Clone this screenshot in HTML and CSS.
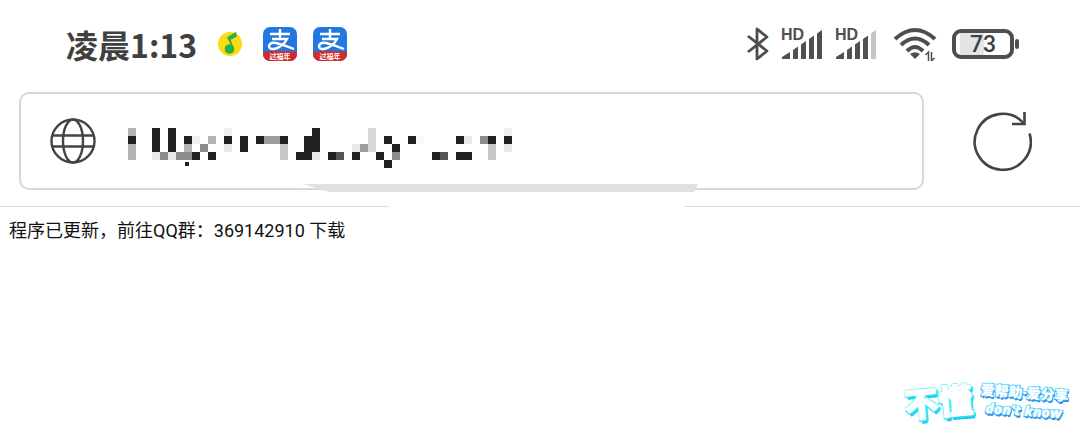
FILE: index.html
```html
<!DOCTYPE html>
<html lang="zh-CN">
<head>
    <meta charset="UTF-8">
    <meta name="viewport" content="width=device-width, initial-scale=1.0">
    <title>程序已更新</title>
    <link rel="stylesheet" href="styles.css">
</head>
<body>

    <header class="browser">
        <div class="status-bar">
            <div class="status-left">
                <span class="time">凌晨1:13</span>
                <svg class="music-icon" viewBox="0 0 26 26" width="26" height="26" aria-hidden="true">
                    <circle cx="13" cy="13" r="12" fill="#fbdc12"/>
                    <circle cx="12.500" cy="18" r="4.800" fill="#2fae4c"/>
                    <path d="M16.500 18 L11 6.500 L18.500 2 L19 5 L13.500 8" fill="#2fae4c" stroke="#2fae4c" stroke-width="1.500"/>
                    <path d="M13.500 8 L17 17" stroke="#fbdc12" stroke-width="0"/>
                </svg>
                <svg class="pay-icon" viewBox="0 0 34 34" width="34" height="34" aria-hidden="true">
                    <clipPath id="payShape"><rect width="34" height="34" rx="7"/></clipPath>
                    <g clip-path="url(#payShape)">
                        <rect width="34" height="34" fill="#2377e0"/>
                        <path d="M0 25 Q17 23 34 25 V34 H0Z" fill="#cf2a2c"/>
                        <path d="M7 7 H27 M17 2 V12 M9 12 H24 Q20 20 11 22 Q6 22.500 6 19 Q7 15 13 16 Q21 18 31 22" fill="none" stroke="#fff" stroke-width="2.400"/>
                        <text class="pay-text" x="17" y="32" text-anchor="middle">过福年</text>
                    </g>
                </svg>
                <svg class="pay-icon" viewBox="0 0 34 34" width="34" height="34" aria-hidden="true">
                    <g clip-path="url(#payShape)">
                        <rect width="34" height="34" fill="#2377e0"/>
                        <path d="M0 25 Q17 23 34 25 V34 H0Z" fill="#cf2a2c"/>
                        <path d="M7 7 H27 M17 2 V12 M9 12 H24 Q20 20 11 22 Q6 22.500 6 19 Q7 15 13 16 Q21 18 31 22" fill="none" stroke="#fff" stroke-width="2.400"/>
                        <text class="pay-text" x="17" y="32" text-anchor="middle">过福年</text>
                    </g>
                </svg>
            </div>

            <div class="status-right">
                <svg class="bluetooth" viewBox="0 0 22 36" width="22" height="36" aria-hidden="true">
                    <path d="M1 10 L20 25 L10 33 V3 L20 11 L1 26" fill="none" stroke="#4e4e4e" stroke-width="2.800" stroke-linejoin="round"/>
                </svg>
                <svg class="signal" viewBox="0 0 42 34" width="42" height="34" aria-hidden="true">
                    <text class="hd" x="0" y="13">HD</text>
                    <g fill="#505050">
                        <path d="M1 32 V30 L9 25 V32Z"/>
                        <path d="M12 32 V23 L17 19.500 V32Z"/>
                        <path d="M20 32 V17.500 L25 14 V32Z"/>
                        <path d="M28 32 V12 L33 8.500 V32Z"/>
                        <path d="M36 32 V6.500 L41 3 V32Z"/>
                    </g>
                </svg>
                <svg class="signal" viewBox="0 0 42 34" width="42" height="34" aria-hidden="true">
                    <text class="hd" x="0" y="13">HD</text>
                    <g fill="#505050">
                        <path d="M1 32 V30 L9 25 V32Z"/>
                        <path d="M12 32 V23 L17 19.500 V32Z"/>
                        <path d="M20 32 V17.500 L25 14 V32Z"/>
                        <path d="M28 32 V12 L33 8.500 V32Z"/>
                        <path d="M36 32 V6.500 L41 3 V32Z" fill="#c4c4c4"/>
                    </g>
                </svg>
                <svg class="wifi" viewBox="0 0 44 34" width="44" height="34" aria-hidden="true">
                    <g fill="none" stroke="#4e4e4e" stroke-width="4">
                        <path d="M2 12 Q22 -6 42 12"/>
                        <path d="M8 18 Q22 5 36 18"/>
                        <path d="M14 24 Q22 16 30 24"/>
                    </g>
                    <path d="M17 27 Q22 23.500 27 27 L22 32Z" fill="#4e4e4e"/>
                    <path d="M32.500 28 L35.500 25 V34 M38.500 25 V34 L41.500 31" fill="none" stroke="#4e4e4e" stroke-width="1.500"/>
                </svg>
                <div class="battery">
                    <span class="battery-level">73</span>
                </div>
            </div>
        </div>

        <form class="toolbar" id="addressForm">
            <div class="address">
                <svg class="globe" viewBox="0 0 46 46" width="46" height="46" aria-hidden="true">
                    <g fill="none" stroke="#444" stroke-width="2.400">
                        <circle cx="23" cy="23" r="21.500"/>
                        <ellipse cx="23" cy="23" rx="10" ry="21.500"/>
                        <path d="M2.500 17.500 H43.500 M2.500 28.500 H43.500"/>
                    </g>
                </svg>
                <div class="url">
                    <input type="text" id="address" name="address" aria-label="网址">
                    <!-- hidden address, one unit per block -->
                    <svg class="mosaic" viewBox="0 0 48 5" width="384" height="40" shape-rendering="crispEdges" aria-hidden="true">
                        <path fill="#222" d="M0 1h1v1h-1z M3 0h1v3h-1z M5 0h1v3h-1z M7 1h1v1h-1z M8 3h1v1h-1z M10 3h1v1h-1z M12 1h1v1h-1z M14 1h1v2h-1z M16 1h1v1h-1z M19 1h1v1h-1z M23 0h1v3h-1z M22 1h1v3h-1z M21 3h1v1h-1z M25 3h1v1h-1z M28 3h1v1h-1z M31 3h1v1h-1z M32 1h1v1h-1z M33 2h1v1h-1z M32 4h1v1h-1z M35 1h1v1h-1z M38 3h1v1h-1z M41 1h1v1h-1z M41 3h2v1h-2z M45 1h1v1h-1z M47 1h1v1h-1z M7.125 4.250h.5v.5h-.5z"/>
                        <path fill="#555" d="M26 3h1v1h-1z M39 3h1v1h-1z"/>
                        <path fill="#8c8c8c" d="M4 3h1v1h-1z M6 3h1v1h-1z M7 3h1v1h-1z M9 2h1v1h-1z M33 3h1v1h-1z M44 1h1v1h-1z"/>
                        <path fill="#9c9c9a" d="M17 1h2v1h-2z M29 2h1v1h-1z"/>
                        <path fill="#b5b5b5" d="M0 0h1v1h-1z M0 2h1v2h-1z M7 2h1v1h-1z M10 1h1v1h-1z"/>
                        <path fill="#c8c8c8" d="M19 2h1v2h-1z M45 2h1v2h-1z"/>
                        <path fill="#d8d8d8" d="M30 0h1v3h-1z"/>
                        <path fill="#e8e8e8" d="M3 3h1v1h-1z M5 3h1v1h-1z M12 2h1v1h-1z M23 3h1v1h-1z M28 2h1v1h-1z M42 1h1v1h-1z M47 2h1v1h-1z"/>
                        <path fill="#efefef" d="M8 1h1v1h-1z M12 0h1v1h-1z M47 0h1v1h-1z"/>
                        <path fill="#f8f8f8" d="M36 1h1v1h-1z"/>
                    </svg>
                </div>
            </div>
            <button type="button" class="reload" aria-label="刷新">
                <svg viewBox="0 0 60 60" width="60" height="60" aria-hidden="true">
                    <g fill="none" stroke="#444" stroke-width="2.600">
                        <path d="M57.500 22.500 A28 28 0 1 1 51.500 12"/>
                        <path d="M52.500 1 V13 H40"/>
                    </g>
                </svg>
            </button>
        </form>

        <div class="smudge"></div>
        <div class="divider">
            <span class="line"></span>
            <span class="line"></span>
        </div>
    </header>

    <main class="content">
        <p>程序已更新，前往QQ群：369142910 下载</p>
    </main>

    <div class="watermark">
        <span class="mark-name">不懂</span>
        <div class="mark-side">
            <span class="mark-slogan">爱帮助·爱分享</span>
            <span class="mark-english">don't know</span>
        </div>
    </div>

</body>
</html>
```

FILE: styles.css
```css
* {
    box-sizing: border-box;
}

body {
    margin: 0;
    min-height: 100vh;
    position: relative;
    background-color: #fff;
    color: #111;
    font-family: Roboto, "Noto Sans CJK SC", sans-serif;
}

.browser {
    position: relative;
}

/* Status bar */
.status-bar {
    display: flex;
    justify-content: space-between;
    align-items: center;
    height: 92px;
    padding: 0 66px 4px 66px;
}

.status-left,
.status-right {
    display: flex;
    align-items: center;
}

.time {
    font-family: "Noto Sans CJK SC", sans-serif;
    font-size: 32px;
    line-height: 48px;
    font-weight: 700;
    color: #404040;
}

.music-icon {
    margin-left: 20px;
}

.pay-icon {
    margin-left: 16px;
}

.music-icon + .pay-icon {
    margin-left: 20px;
}

.pay-text {
    font-family: "Noto Sans CJK SC", sans-serif;
    font-size: 7px;
    font-weight: 700;
    fill: #fff;
}

.status-right {
    gap: 12px;
}

.hd {
    font-family: "Liberation Sans", sans-serif;
    font-size: 16px;
    font-weight: 700;
    fill: #505050;
}

.wifi {
    margin-left: 4px;
}

.battery {
    position: relative;
    width: 62px;
    height: 30px;
    margin-left: 3px;
    border: 4px solid #4e4e4e;
    border-radius: 9px;
    background: linear-gradient(to right, #fff 4px, #e4e4e4 4px, #e4e4e4 28px, #fff 28px);
    text-align: center;
}

.battery::after {
    content: "";
    position: absolute;
    top: 6px;
    right: -9px;
    width: 4px;
    height: 10px;
    border-radius: 2px;
    background-color: #4e4e4e;
}

.battery-level {
    display: block;
    font-size: 23px;
    line-height: 24px;
    font-weight: 500;
    color: #404040;
}

/* Address bar */
.toolbar {
    display: flex;
    align-items: center;
    gap: 48px;
    padding: 0 48px 16px 19px;
}

.address {
    flex: 1;
    display: flex;
    align-items: center;
    gap: 32px;
    height: 98px;
    padding: 0 29px;
    border: 2px solid #d8d8d8;
    border-radius: 10px;
}

.globe {
    flex: none;
}

.url {
    flex: 1;
    position: relative;
    height: 40px;
}

.url input {
    width: 100%;
    height: 40px;
    padding: 0;
    border: none;
    outline: none;
    background: none;
    font-size: 34px;
}

.mosaic {
    position: absolute;
    top: 7px;
    left: 0;
}

.reload {
    width: 60px;
    height: 60px;
    padding: 0;
    border: none;
    background: none;
    cursor: pointer;
}

.reload svg {
    display: block;
}

.smudge {
    position: absolute;
    bottom: 15px;
    left: 28%;
    width: 37%;
    height: 8px;
    background-color: #e0e2dd;
    clip-path: polygon(0 0, 99% 0, 98% 100%, 7% 100%);
}

.divider {
    display: flex;
}

.line {
    width: 36%;
    height: 1px;
    background-color: #dedede;
}

.line + .line {
    width: auto;
    flex: 1;
    margin-left: 295px;
}

/* Page text */
.content {
    padding: 12px 9px;
}

.content p {
    margin: 0;
    font-size: 18px;
    line-height: 24px;
}

/* Corner logo */
.watermark {
    position: absolute;
    right: 12px;
    bottom: 9px;
    display: flex;
    align-items: center;
    gap: 8px;
    font-family: "Open Sans", "Noto Sans CJK SC", sans-serif;
    font-weight: 800;
    color: #fff;
    white-space: nowrap;
}

.mark-name {
    font-size: 34px;
    line-height: 40px;
    transform: rotate(-5deg);
    -webkit-text-stroke: 1px #fff;
    text-shadow: -1px -1px 0 #6ff6fb, 1px -1px 0 #6ff6fb, 2px 1px 0 #3feaf8, 3px 2px 0 #27dcf5, -1px 2px 0 #3feaf8, 2px 4px 0 #1cc9ee;
}

.mark-side {
    display: flex;
    flex-direction: column;
    transform: rotate(4deg);
    text-shadow: -1px -1px 0 #7fe4ff, 1px -1px 0 #48c4f8, 1px 1px 0 #2a9df0, -1px 1px 0 #2a9df0, 1px 2px 0 #2a8ee6;
}

.mark-slogan {
    font-size: 14px;
    line-height: 18px;
}

.mark-english {
    padding-left: 6px;
    font-size: 14px;
    line-height: 18px;
    font-style: italic;
}
```
